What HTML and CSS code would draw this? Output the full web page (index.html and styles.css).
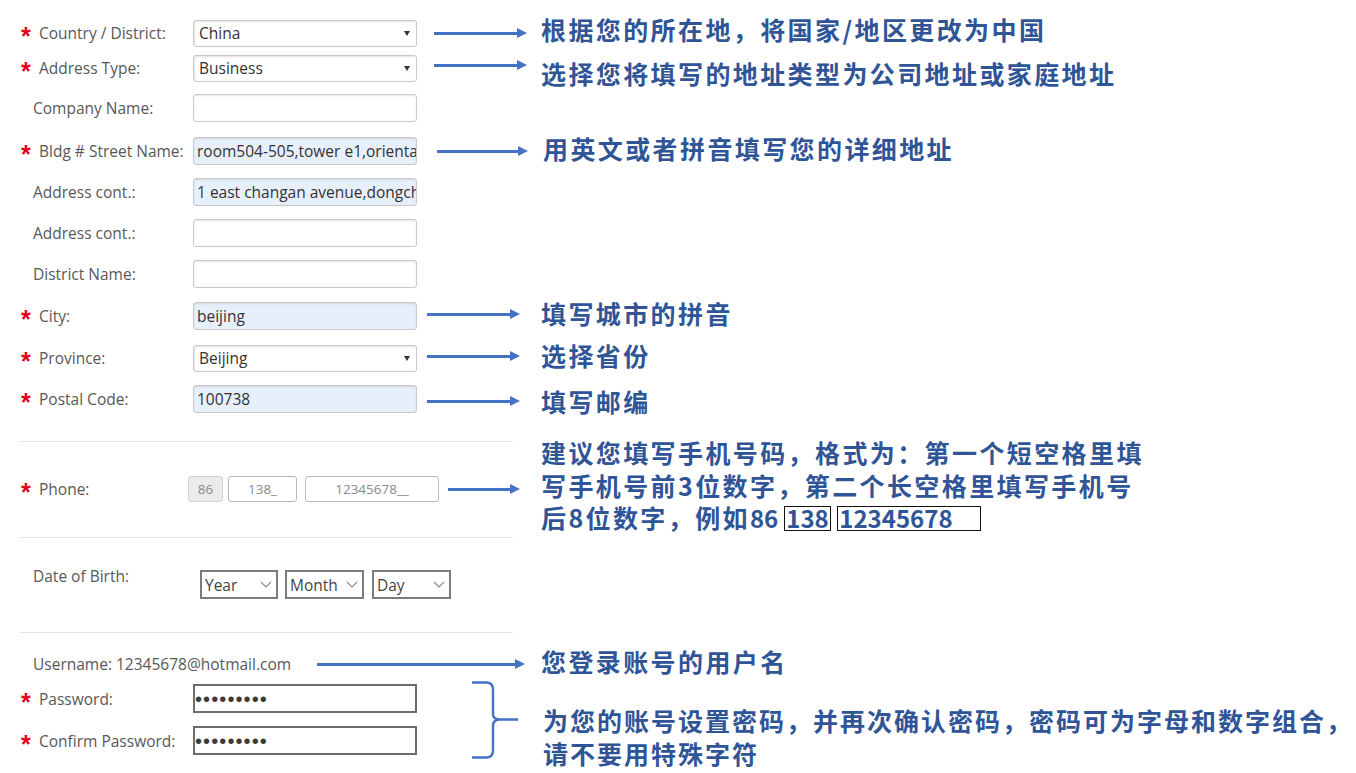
FILE: index.html
```html
<!DOCTYPE html>
<html lang="zh-CN">
<head>
<meta charset="utf-8">
<title>Address form guide</title>
<link rel="stylesheet" href="styles.css">
</head>
<body>
<div class="page">
  <div class="row r1">
    <div class="label req">Country / District:</div>
    <div class="ctl select">China<span class="caret"></span></div>
    <div class="note note-a n1"><span class="arrow w93"></span><span class="ann">根据您的所在地，将国家/地区更改为中国</span></div>
  </div>
  <div class="row r2">
    <div class="label req">Address Type:</div>
    <div class="ctl select">Business<span class="caret"></span></div>
    <div class="note note-a n2"><span class="arrow w93"></span><span class="ann">选择您将填写的地址类型为公司地址或家庭地址</span></div>
  </div>
  <div class="row r3">
    <div class="label">Company Name:</div>
    <div class="ctl"></div>
  </div>
  <div class="row r4">
    <div class="label req">Bldg # Street Name:</div>
    <div class="ctl filled">room504-505,tower e1,oriental plaza</div>
    <div class="note note-b"><span class="arrow w91"></span><span class="ann">用英文或者拼音填写您的详细地址</span></div>
  </div>
  <div class="row r5">
    <div class="label">Address cont.:</div>
    <div class="ctl filled">1 east changan avenue,dongcheng district</div>
  </div>
  <div class="row r6">
    <div class="label">Address cont.:</div>
    <div class="ctl"></div>
  </div>
  <div class="row r7">
    <div class="label">District Name:</div>
    <div class="ctl"></div>
  </div>
  <div class="row r8">
    <div class="label req">City:</div>
    <div class="ctl filled">beijing</div>
    <div class="note note-c n-up"><span class="arrow w93"></span><span class="ann">填写城市的拼音</span></div>
  </div>
  <div class="row r9">
    <div class="label req">Province:</div>
    <div class="ctl select">Beijing<span class="caret"></span></div>
    <div class="note note-c n-up"><span class="arrow w93"></span><span class="ann">选择省份</span></div>
  </div>
  <div class="row r10">
    <div class="label req">Postal Code:</div>
    <div class="ctl filled">100738</div>
    <div class="note note-c n-down"><span class="arrow w93"></span><span class="ann">填写邮编</span></div>
  </div>

  <div class="sep sep1"></div>

  <div class="row phone-row">
    <div class="label req lbl-phone">Phone:</div>
    <div class="ph ph-cc">86</div>
    <div class="ph ph-a">138_</div>
    <div class="ph ph-b">12345678__</div>
    <div class="note note-d">
      <span class="arrow w72"></span>
      <div class="ann ann-multi">建议您填写手机号码，格式为：第一个短空格里填<br>写手机号前3位数字，第二个长空格里填写手机号<br>后8位数字，例如<span class="num">86</span><span class="box box-a">138</span><span class="box box-b">12345678</span></div>
    </div>
  </div>

  <div class="sep sep2"></div>

  <div class="row dob-row">
    <div class="label lbl-dob">Date of Birth:</div>
    <div class="dsel dsel-y">Year<svg class="chev" width="12" height="7" viewBox="0 0 12 7"><path d="M1 1 L6 6 L11 1" fill="none" stroke="#8a8a8a" stroke-width="1.1"/></svg></div>
    <div class="dsel dsel-m">Month<svg class="chev" width="12" height="7" viewBox="0 0 12 7"><path d="M1 1 L6 6 L11 1" fill="none" stroke="#8a8a8a" stroke-width="1.1"/></svg></div>
    <div class="dsel dsel-d">Day<svg class="chev" width="12" height="7" viewBox="0 0 12 7"><path d="M1 1 L6 6 L11 1" fill="none" stroke="#8a8a8a" stroke-width="1.1"/></svg></div>
  </div>

  <div class="sep sep3"></div>

  <div class="row user-row">
    <div class="label lbl-user">Username: 12345678@hotmail.com</div>
    <div class="note note-e"><span class="arrow w208"></span><span class="ann">您登录账号的用户名</span></div>
  </div>

  <div class="pw-group">
    <div class="pw-fields">
      <div class="row pw-row">
        <div class="label req">Password:</div>
        <div class="pw">•••••••••</div>
      </div>
      <div class="row pw-row pw-row2">
        <div class="label req">Confirm Password:</div>
        <div class="pw">•••••••••</div>
      </div>
    </div>
    <svg class="brace" width="48" height="80" viewBox="0 0 48 80">
      <path d="M1 2.5 L15 2.5 Q22 2.5 22 9.5 L22 34 Q22 39.5 29 39.5 L47 39.5 M29 39.5 Q22 39.5 22 46 L22 70.5 Q22 77.5 15 77.5 L1 77.5" fill="none" stroke="#4472C4" stroke-width="2.4"/>
    </svg>
    <div class="ann ann-pw">为您的账号设置密码，并再次确认密码，密码可为字母和数字组合，<br>请不要用特殊字符</div>
  </div>
</div>
</body>
</html>
```

FILE: styles.css
```css
* { box-sizing: border-box; }

html, body {
  margin: 0;
  background: #ffffff;
}

body {
  width: 1356px;
  height: 773px;
  overflow: hidden;
  font-family: "Open Sans", "Noto Sans", sans-serif;
  font-size: 15.5px;
  color: #585858;
}

.page {
  padding: 19px 0 0 20px;
}

/* ---------- rows ---------- */
.row {
  display: flex;
  align-items: center;
  height: 28px;
}

.r2 { margin-top: 7px; }
.r3 { margin-top: 12px; }
.r4 { margin-top: 15px; }
.r5, .r6, .r7, .r10 { margin-top: 13px; }
.r8, .r9 { margin-top: 14px; }

.label {
  flex: none;
  width: 173px;
  padding-left: 13px;
  white-space: nowrap;
  line-height: 20px;
}

.label.req {
  padding-left: 0;
  display: flex;
  align-items: center;
}

.req::before {
  content: "*";
  flex: none;
  width: 18px;
  margin-left: 1px;
  color: #e2001a;
  font: 700 25px/20px "Liberation Sans", sans-serif;
  transform: translateY(3px);
}

/* ---------- inputs ---------- */
.ctl {
  flex: none;
  width: 224px;
  height: 28px;
  display: flex;
  align-items: center;
  padding-left: 5px;
  border: 1px solid #c9c9c9;
  border-radius: 3px;
  box-shadow: inset 0 1px 2px rgba(0, 0, 0, 0.1);
  background: #ffffff;
  color: #333333;
  white-space: nowrap;
  overflow: hidden;
}

.ctl.select {
  height: 27px;
  box-shadow: inset 1px 1px 2px rgba(0, 0, 0, 0.12);
}

.ctl.filled {
  background: #e7f0fa;
  padding-left: 3px;
}

.caret {
  margin-left: auto;
  margin-right: 6px;
  border-top: 5px solid #333333;
  border-left: 3.5px solid transparent;
  border-right: 3.5px solid transparent;
}

/* ---------- annotations ---------- */
.note {
  display: flex;
  align-items: center;
}

.note .ann { margin-top: -6px; }

.note-a { margin-left: 17px; }
.note-a .ann { margin-left: 14px; }
.note-b { margin-left: 20px; }
.note-b .ann { margin-left: 15px; }
.note-c { margin-left: 10px; }
.note-c .ann { margin-left: 21px; }
.note-d { margin-left: 9px; }
.note-d .ann { margin-left: 21px; }
.note-e { margin-left: 0; }
.note-e .ann { margin-left: 16px; }

.note.n1 .ann { margin-top: -8px; }
.n2 .arrow { margin-top: -6px; }
.note.n2 .ann { margin-top: 10px; }
.n-up .arrow { margin-top: -4px; }
.n-down .arrow { margin-top: 4px; }
.note.n-down .ann { margin-top: 4px; }

.arrow {
  flex: none;
  display: flex;
  align-items: center;
}

.arrow::before {
  content: "";
  flex: 1;
  height: 3px;
  background: #4472c4;
}

.arrow::after {
  content: "";
  border-left: 10px solid #4472c4;
  border-top: 5px solid transparent;
  border-bottom: 5px solid transparent;
}

.w93 { width: 93px; }
.w91 { width: 91px; }
.w72 { width: 72px; }
.w208 { width: 208px; }

.ann {
  font-family: "Noto Sans CJK SC", "Noto Sans", sans-serif;
  font-weight: 700;
  font-size: 25px;
  line-height: 30px;
  letter-spacing: 2.4px;
  color: #2f5597;
  white-space: nowrap;
}

.note .ann-multi {
  line-height: 32.5px;
  margin-top: -7px;
}

.num {
  letter-spacing: 0;
  font-size: 24px;
}

.box {
  display: inline-block;
  height: 25px;
  line-height: 21px;
  border: 1px solid #111111;
  letter-spacing: 0;
  font-size: 24px;
  padding-left: 1px;
  vertical-align: middle;
  margin-top: -6px;
}

.box-a { width: 47px; margin-left: 6px; }
.box-b { width: 144px; margin-left: 6px; }

/* ---------- separators ---------- */
.sep {
  width: 493px;
  height: 1px;
  background: #e4e4e4;
}

.sep1 { margin-top: 28px; }
.sep2 { margin-top: 34px; }
.sep3 { margin-top: 33px; }

/* ---------- phone ---------- */
.phone-row { margin-top: 33px; }

.lbl-phone { width: 168px; }

.ph {
  flex: none;
  height: 26px;
  display: flex;
  align-items: center;
  justify-content: center;
  border: 1px solid #b8b8b8;
  border-radius: 3px;
  font-size: 13.5px;
  color: #8a8a8a;
}

.ph-cc {
  width: 35px;
  background: #ebebeb;
  border-color: #d2d2d2;
}

.ph-a { width: 69px; margin-left: 5px; }
.ph-b { width: 134px; margin-left: 8px; }

/* ---------- date of birth ---------- */
.dob-row {
  margin-top: 28px;
  height: 33px;
  align-items: flex-start;
}

.lbl-dob { width: 180px; }

.dsel {
  flex: none;
  height: 29px;
  margin-top: 4px;
  display: flex;
  align-items: center;
  padding-left: 3px;
  border: 2px solid #7c7c7c;
  color: #444444;
  background: #ffffff;
}

.dsel-y { width: 78px; }
.dsel-m { width: 79px; margin-left: 7px; }
.dsel-d { width: 79px; margin-left: 8px; }

.chev {
  margin-left: auto;
  margin-right: 4px;
}

/* ---------- account ---------- */
.user-row { margin-top: 17px; }

.lbl-user { width: 297px; }

.pw-group {
  display: flex;
  align-items: flex-start;
  margin-top: 6px;
}

.pw-fields {
  flex: none;
  width: 396px;
}

.pw-row { height: 29px; }
.pw-row2 { margin-top: 13px; }

.pw {
  flex: none;
  width: 224px;
  height: 29px;
  display: flex;
  align-items: center;
  padding-left: 0;
  border: 2px solid #6c6c6c;
  font: 20px/1 "Liberation Sans", sans-serif;
  letter-spacing: 1.1px;
  color: #3a3a3a;
  background: #ffffff;
}

.brace {
  flex: none;
  margin-left: 55px;
  margin-top: -4px;
}

.ann-pw {
  margin-left: 24px;
  margin-top: 20px;
  line-height: 33px;
  letter-spacing: 2px;
}
```
